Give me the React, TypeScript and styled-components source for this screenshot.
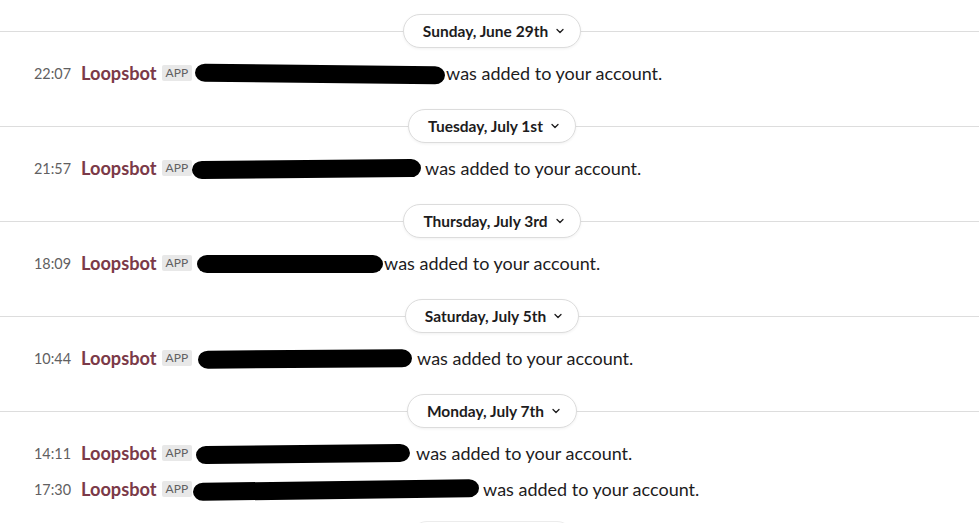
import React from "react";
import styled, { createGlobalStyle } from "styled-components";

const Global = createGlobalStyle`
  html, body { margin: 0; padding: 0; background: #ffffff; }
  body { font-family: Lato, "Noto Sans", sans-serif; color: #1d1c1d; overflow: hidden; }
`;

const Page = styled.div`
  width: 979px;
  height: 523px;
  overflow: hidden;
  background: #fff;
  padding-top: 11px;
  box-sizing: border-box;
`;

const Section = styled.section`
  display: flex;
  flex-direction: column;
`;

const Divider = styled.div<{ $line: boolean }>`
  position: relative;
  height: 40px;
  display: flex;
  align-items: center;
  justify-content: center;
  padding-left: 5px;
  &::before {
    content: "";
    display: ${(p) => (p.$line ? "block" : "none")};
    position: absolute;
    left: 0;
    right: 0;
    top: 20px;
    height: 1px;
    background: #dddddd;
  }
`;

const Pill = styled.div`
  position: relative;
  z-index: 1;
  height: 34px;
  box-sizing: border-box;
  padding: 0 16px 0 19px;
  border: 1px solid #dcdcdc;
  border-radius: 17px;
  background: #fff;
  box-shadow: 0 1px 3px rgba(0, 0, 0, 0.06);
  display: flex;
  align-items: center;
  gap: 8px;
  font-size: 15.5px;
  font-weight: 700;
  color: #1d1c1d;
  white-space: nowrap;
`;

const GhostPill = styled.div`
  width: 164px;
  height: 34px;
  box-sizing: border-box;
  border: 1px solid #ececec;
  border-radius: 17px;
  background: #fff;
`;

const Messages = styled.div<{ $pb: number }>`
  display: flex;
  flex-direction: column;
  padding: 4px 0 ${(p) => p.$pb}px;
`;

const Row = styled.div`
  height: 36px;
  display: flex;
  align-items: center;
  white-space: nowrap;
`;

const Time = styled.span`
  width: 71px;
  text-align: right;
  font-size: 14.4px;
  color: #616061;
  margin-right: 10px;
  flex: none;
`;

const Name = styled.span`
  font-size: 18.2px;
  font-weight: 700;
  color: #7b3a48;
  margin-right: 5px;
`;

const Badge = styled.span`
  height: 16px;
  padding: 0 4px;
  border-radius: 2px;
  background: #e8e8e8;
  color: #616061;
  font-size: 12px;
  line-height: 16px;
  margin-right: 4px;
  margin-top: -1px;
`;

const Redacted = styled.span<{ $w: number; $tilt: number }>`
  display: inline-block;
  width: ${(p) => p.$w}px;
  height: 18px;
  margin-top: 2px;
  background: #000;
  border-radius: 10px / 9px;
  transform: rotate(${(p) => p.$tilt}deg);
`;

const Body = styled.span<{ $gap: number }>`
  font-size: 18px;
  color: #1d1c1d;
  margin-left: ${(p) => p.$gap}px;
`;

const Chevron = () => (
  <svg width="8" height="6" viewBox="0 0 8 6" fill="none">
    <path d="M1 1.5 L4 4.5 L7 1.5" stroke="#1d1c1d" strokeWidth="1.3" strokeLinecap="round" strokeLinejoin="round" />
  </svg>
);

type Msg = { time: string; w: number; gap: number; tilt: number; off: number };
type Day = { label: string; msgs: Msg[]; pb: number };

const days: Day[] = [
  { label: "Sunday, June 29th", pb: 15, msgs: [{ time: "22:07", w: 250, gap: 1, tilt: 0.6, off: -1 }] },
  { label: "Tuesday, July 1st", pb: 15, msgs: [{ time: "21:57", w: 229, gap: 4, tilt: -0.5, off: -4 }] },
  { label: "Thursday, July 3rd", pb: 15, msgs: [{ time: "18:09", w: 186, gap: 1, tilt: 0, off: 1 }] },
  { label: "Saturday, July 5th", pb: 15, msgs: [{ time: "10:44", w: 214, gap: 5, tilt: -0.4, off: 2 }] },
  {
    label: "Monday, July 7th",
    pb: 11,
    msgs: [
      { time: "14:11", w: 214, gap: 6, tilt: -0.6, off: 0 },
      { time: "17:30", w: 286, gap: 4, tilt: -0.8, off: -3 },
    ],
  },
];

export default function App() {
  return (
    <Page>
      <Global />
      {days.map((d) => (
        <Section key={d.label}>
          <Divider $line>
            <Pill>
              {d.label}
              <Chevron />
            </Pill>
          </Divider>
          <Messages $pb={d.pb}>
            {d.msgs.map((m) => (
              <Row key={m.time}>
                <Time>{m.time}</Time>
                <Name>Loopsbot</Name>
                <Badge>APP</Badge>
                <Redacted $w={m.w} $tilt={m.tilt} style={{ marginLeft: m.off }} />
                <Body $gap={m.gap}>was added to your account.</Body>
              </Row>
            ))}
          </Messages>
        </Section>
      ))}
      <Divider $line={false}>
        <GhostPill />
      </Divider>
    </Page>
  );
}
